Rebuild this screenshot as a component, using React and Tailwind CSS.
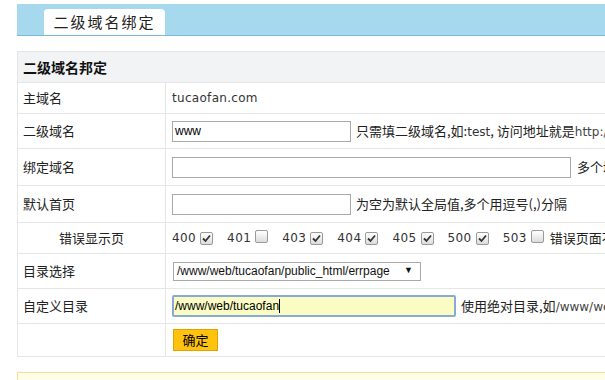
import React from 'react';

const cjk = { fontFamily: '"Noto Sans CJK SC", "Noto Sans", sans-serif' };
const latin = { fontFamily: '"DejaVu Sans", "Noto Sans CJK SC", sans-serif' };
const arial = { fontFamily: '"Liberation Sans", Arial, sans-serif' };

const codes = [
  { code: '400', checked: true },
  { code: '401', checked: false },
  { code: '403', checked: true },
  { code: '404', checked: true },
  { code: '405', checked: true },
  { code: '500', checked: true },
  { code: '503', checked: false },
];

const Check = ({ checked }) => (
  <span className="inline-flex items-center justify-center w-[13px] h-[13px] border border-[#9a9a9a] rounded-[2px] bg-gradient-to-b from-white to-[#dcdcdc]">
    {checked && (
      <svg width="9" height="9" viewBox="0 0 9 9">
        <path d="M1 4.5 L3.5 7 L8 1.5" fill="none" stroke="#333" strokeWidth="1.8" />
      </svg>
    )}
  </span>
);

const Row = ({ label, h, center, children }) => (
  <div className={`flex border-b border-[#e6e6e6] ${h}`}>
    <div
      className={`w-[148px] shrink-0 border-r border-[#e6e6e6] flex items-center text-[13px] text-[#222] ${center ? 'justify-center' : 'pl-[5px]'}`}
      style={cjk}
    >
      {label}
    </div>
    <div className="flex-1 flex items-center pl-[6px] text-[13px] text-[#222] whitespace-nowrap" style={cjk}>
      {children}
    </div>
  </div>
);

export default function App() {
  return (
    <div className="w-[605px] h-[380px] overflow-hidden bg-white">
      <div className="ml-[17px] w-[800px]">
        {/* header band */}
        <div className="mt-[4px] h-[32px] bg-[#a6d8ee] border-b border-[#7db8d8] flex items-end pl-[27px]">
          <div
            className="w-[121px] h-[26px] bg-white rounded-t-[4px] flex items-center justify-center text-[15px] tracking-[2px] text-[#222]"
            style={cjk}
          >
            二级域名绑定
          </div>
        </div>

        {/* form table */}
        <div className="mt-[15px] border-l border-t border-[#e6e6e6]">
          <div className="h-[31px] bg-[#f2f3f4] border-b border-[#e6e6e6] flex items-center pl-[5px] text-[14px] font-bold text-[#111]" style={cjk}>
            二级域名邦定
          </div>

          <Row label="主域名" h="h-[31px]">
            <span className="text-[12px] tracking-[0.3px] text-[#333]" style={latin}>tucaofan.com</span>
          </Row>

          <Row label="二级域名" h="h-[35px]">
            <div className="w-[179px] h-[21px] border border-[#a9a9a9] flex items-center pl-[2px] text-[12px] text-black" style={arial}>
              www
            </div>
            <span className="ml-[5px]">
              只需填二级域名,如:<span className="text-[12px] text-[#333]" style={latin}>test</span>, 访问地址就是<span className="text-[12px] text-[#444]" style={latin}>http://</span><span className="text-[12px] text-[#e98d00]" style={latin}>test.tucaofan.com</span>
            </span>
          </Row>

          <Row label="绑定域名" h="h-[37px]">
            <div className="w-[399px] h-[21px] border border-[#a9a9a9]" />
            <span className="ml-[6px]">多个域名用逗号(,)分隔</span>
          </Row>

          <Row label="默认首页" h="h-[37px]">
            <div className="w-[179px] h-[21px] border border-[#a9a9a9]" />
            <span className="ml-[5px]">为空为默认全局值,多个用逗号(,)分隔</span>
          </Row>

          <Row label="错误显示页" h="h-[31px]" center>
            <div className="flex items-center">
              {codes.map((c, i) => (
                <div key={c.code} className={`flex items-center ${i === 0 ? '' : 'ml-[14px]'}`}>
                  <span className="text-[12px] tracking-[0.4px] text-[#333]" style={latin}>{c.code}</span>
                  <span className="ml-[4px]">
                    <Check checked={c.checked} />
                  </span>
                </div>
              ))}
              <span className="ml-[6px]">错误页面不存在时使用默认</span>
            </div>
          </Row>

          <Row label="目录选择" h="h-[35px]">
            <div className="ml-[1px] w-[248px] h-[19px] border border-[#a9a9a9] flex items-center justify-between pl-[3px] pr-[7px] text-[12px] text-[#111]" style={arial}>
              <span>/www/web/tucaofan/public_html/errpage</span>
              <span className="text-[9px]">▼</span>
            </div>
          </Row>

          <Row label="自定义目录" h="h-[35px]">
            <div className="w-[284px] h-[22px] border-2 border-[#8aaad6] rounded-[2px] bg-[#fafcc4] flex items-center pl-[1px] text-[12px] text-black" style={arial}>
              /www/web/tucaofan<span className="inline-block w-px h-[14px] bg-black" />
            </div>
            <span className="ml-[5px]">
              使用绝对目录,如<span className="text-[12px] text-[#444]" style={latin}>/www/web/tucaofan/</span>
            </span>
          </Row>

          <Row label="" h="h-[33px]">
            <button className="ml-[1px] w-[45px] h-[22px] bg-[#ffc20e] border border-[#e2a300] text-[13px] text-black flex items-center justify-center" style={cjk}>
              确定
            </button>
          </Row>
        </div>

        <div className="mt-[15px] h-[40px] bg-[#fffde6] border border-[#f6df94]" />
      </div>
    </div>
  );
}
